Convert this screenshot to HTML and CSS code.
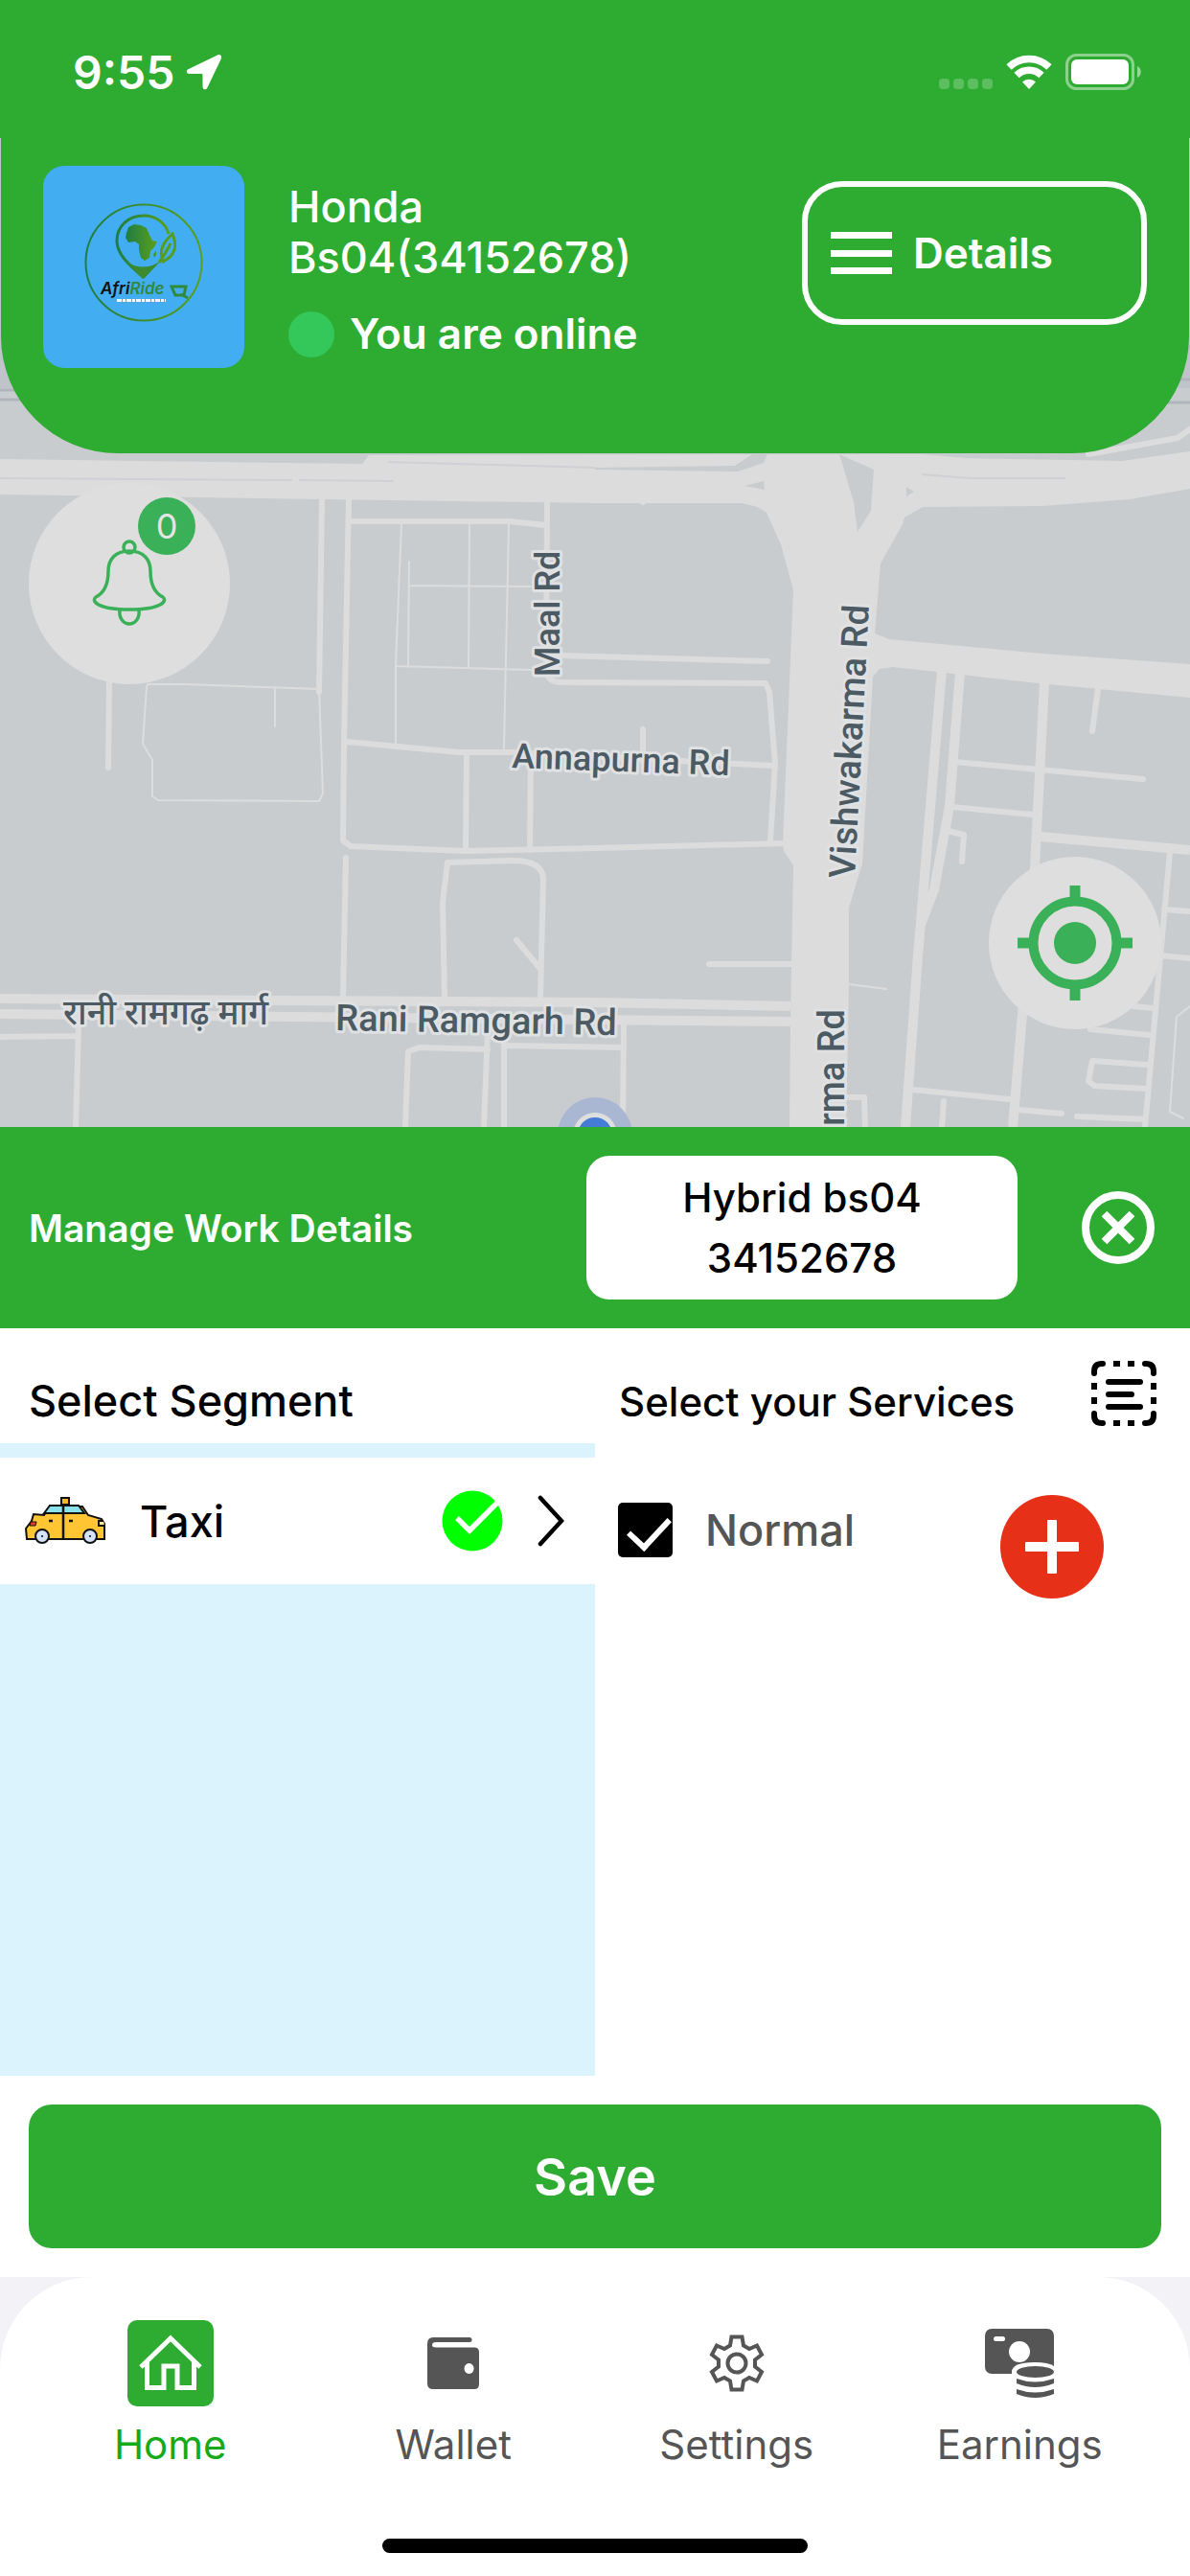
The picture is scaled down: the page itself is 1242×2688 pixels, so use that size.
FILE: index.html
```html
<!DOCTYPE html>
<html lang="en">
  <head>
    <meta charset="UTF-8" />
    <meta name="viewport" content="width=device-width, initial-scale=1.0" />
    <title>AfriRide Driver</title>
    <link rel="stylesheet" href="styles.css">
  </head>
  <body>
    <div class="status-bar">
      <div class="status-time">
        <span>9:55</span>
        <svg width="38" height="38" viewBox="0 0 38 38">
          <path d="M33 1.600 3 16c-3.500 1.700-2.500 5 1 5h12c1 0 1.500.5 1.500 1.500V34c0 4 3.500 4.500 5 1.200L36.500 6c1.500-3.600-.5-6-3.500-4.400z" fill="#fff" />
        </svg>
      </div>
      <div class="status-icons">
        <svg width="56" height="38" viewBox="0 0 56 38" fill="#fff" opacity=".22">
          <rect x="0" y="26" width="11" height="11" rx="4" />
          <rect x="15" y="26" width="11" height="11" rx="4" />
          <rect x="30" y="26" width="11" height="11" rx="4" />
          <rect x="45" y="26" width="11" height="11" rx="4" />
        </svg>
        <svg width="48" height="38" viewBox="0 0 48 38">
          <path d="M3 14a30 30 0 0 1 42 0M11 22.500a18.500 18.500 0 0 1 26 0" fill="none" stroke="#fff" stroke-width="7.500" />
          <path d="M24 37l-7-7.500a10 10 0 0 1 14 0z" fill="#fff" />
        </svg>
        <svg width="80" height="38" viewBox="0 0 80 38">
          <rect x="1.500" y="1.500" width="69" height="35" rx="10" fill="none" stroke="#fff" stroke-width="3" opacity=".45" />
          <rect x="6" y="6" width="60" height="26" rx="6" fill="#fff" />
          <path d="M75 13c5 2 5 10 0 12z" fill="#fff" opacity=".5" />
        </svg>
      </div>
    </div>

    <main class="map">
      <svg class="map-canvas" viewBox="0 144 1242 1032" preserveAspectRatio="xMidYMin slice">
        <rect y="144" width="1242" height="1032" fill="#c9cccf" />
        <rect y="144" width="1242" height="261" fill="#bfc3ca" />
        <path d="M0 407H30M1200 396H1242M0 417H40M1200 420H1242" stroke="#b0b5bc" stroke-width="3" />

        <!-- main roads -->
        <path class="area" d="M0 479 300 483 378 484 385 475 962 474 1009 478 1171 481 1242 471V510L1179 521 1088 528 963 529 944 540 942 547 919 588 913 661 928 667 1088 682 1242 693V728L1084 713 932 696 918 698 911 706 900 901 886 947V1029L883 1176H824L825 1066 828 903 818 888 817 880 828 616 815 568 800 535 791 529 774 525H621L0 516z" />
        <path class="land" d="M785 474 801 474 797 483 770 492 621 490 621 488 767 486zM777 507 797 502 798 511zM876 474 912 490 909 533 895 555 891 524zM946 508 954 513 946 518z" />
        <path d="M0 499 305 501M312 501 410 502M405 482 621 488M962 495 1013 499H1112" fill="none" stroke="#ced0d4" stroke-width="2" />

        <g class="road">
          <path d="M336 519 333 722M114 712 113 801M364 519 359 777 358 877 366 883 485 888 621 885 817 880" />
          <path d="M366 544H531L570 548M571 522 570 700Q572 712 586 712L799 713 803 722 809 797 804 878M584 684 801 690" />
          <path d="M362 774 479 785 535 785 807 799M487 788 486 887M554 790 553 887M671 761V795" />
          <path d="M361 895 358 1040M464 1040 462 942 467 900 535 898Q567 898 567 918L564 1040M539 981 564 1011" />
          <path d="M0 1082 81 1081M82 1070 79 1176M423 1176 426 1097 438 1093 509 1095M509 1075 505 1176M526 1176V1091L651 1093M651 1068 650 1176M740 1006H825" />
          <path d="M1146 719 1140 763M997 795 1193 813M993 842 1078 850M989 867 1006 871 1004 899M1221 889 1195 1176M1215 949 1242 951M1211 997 1242 1000M1183 1050 1203 1052M1138 1074 1199 1080" />
          <path d="M1197 1111 1140 1107 1136 1128 1142 1133 1195 1136M952 1137 1053 1147M985 1149 983 1176M884 1145H902L903 1176M1063 1158 1108 1162M1124 1165 1195 1168M1136 474 1229 457 1242 448M668 520 671 524" />
        </g>
        <g class="road wide">
          <path d="M0 1042 621 1046 825 1050M0 1058 825 1066M983 699 958 997 945 1176M1002 701 991 841 975 928 961 965M1090 712 1080 905 1057 1176M1086 873 1242 887" />
        </g>
        <g class="road thin">
          <path d="M419 547 413 694V777M427 586 426 695M427 611 554 612M490 547 489 696M531 547 526 781M413 695 554 699" />
          <path d="M154 714H194L333 719 337 828 333 836 165 835 159 831V793L149 776 153 717zM287 717V758M1242 1050 1228 1061 1221 1160 1235 1167M886 1027 925 1032" />
        </g>

        <circle cx="621" cy="1184" r="39" fill="#a9b7d2" />
        <circle cx="621" cy="1184" r="23" fill="#dedede" />
        <circle cx="621" cy="1184" r="18" fill="#447cd6" />

        <g class="map-label">
          <text transform="translate(584 706) rotate(-90)">Maal Rd</text>
          <text transform="translate(534 801) rotate(2)">Annapurna Rd</text>
          <text class="main-road" transform="translate(892 917) rotate(-87)">Vishwakarma Rd</text>
          <text class="main-road" transform="translate(350 1075) rotate(1)">Rani Ramgarh Rd</text>
          <text transform="translate(66 1069)" lang="hi">रानी रामगढ़ मार्ग</text>
          <text class="main-road" transform="translate(881 1053) rotate(-90)" text-anchor="end">Vishwakarma Rd</text>
        </g>
      </svg>

      <header class="profile">
        <svg class="avatar" viewBox="-25 -17 210 211">
          <defs>
            <linearGradient id="leaf" x1="0" x2="1">
              <stop offset="0" stop-color="#1f7d45" />
              <stop offset="1" stop-color="#5a9f1c" />
            </linearGradient>
          </defs>
          <circle cx="80" cy="84" r="60.500" fill="none" stroke="url(#leaf)" stroke-width="2" />
          <path d="M80 100C70 90 52 78 52 61 52 46 64 35 80 35 93 35 103 43 106 54" fill="none" stroke="url(#leaf)" stroke-width="3" />
          <path d="M62 83q17 11 35 0L80 101z" fill="#3b8a30" />
          <path d="M62 53l2-6 6-3 7 1 6 3 3 7 3 6 5 1-3 6-4 4-1 7-5 3-4-3-2-8v-6l-4-3-7 1-3-5z" fill="url(#leaf)" />
          <path d="M90 75l3-3v4l-2 3z" fill="#4a9628" />
          <path d="M110 54c5 12 4 22-10 29-4-11-1-19 10-29zM96 84c4-6 8-12 12-20" fill="none" stroke="#569c1e" stroke-width="3" />
          <text class="logo-name" x="35" y="117"><tspan fill="#111">Afri</tspan><tspan fill="#2f8a3a">Ride</tspan></text>
          <path d="M109 109h15l-2 9h-9zM119 117l7 4" fill="none" stroke="#2f8a3a" stroke-width="3" />
          <path d="M52 123.500h51" stroke="#eef6ff" stroke-width="3" stroke-dasharray="5 1 3 1" />
        </svg>
        <div class="driver">
          <div class="driver-name">Honda Bs04(34152678)</div>
          <div class="driver-state"><span class="dot"></span>You are online</div>
        </div>
        <button class="details-btn">
          <svg width="64" height="46" viewBox="0 0 64 46" fill="#fff">
            <rect y="1" width="64" height="7" />
            <rect y="20" width="64" height="7" />
            <rect y="38" width="64" height="7" />
          </svg>
          Details
        </button>
      </header>

      <button class="map-btn bell-btn" aria-label="Notifications">
        <svg width="78" height="92" viewBox="0 0 78 92" fill="none" stroke="#3ab158" stroke-width="3.500">
          <circle cx="39" cy="8" r="6" />
          <path d="M39 12C24 12 17 21 17 33 17 48 12 56 4 60-1 64 5 73 39 73S79 64 74 60C66 56 61 48 61 33 61 21 54 12 39 12z" />
          <path d="M29 74c-1 8 4 14 10 14s11-6 10-14" />
        </svg>
        <span class="badge">0</span>
      </button>

      <button class="map-btn locate-btn" aria-label="My location">
        <svg width="120" height="120" viewBox="0 0 120 120">
          <path d="M60 0v16M60 104v16M0 60h16M104 60h16" stroke="#3ab158" stroke-width="11" />
          <circle cx="60" cy="60" r="43.500" fill="none" stroke="#3ab158" stroke-width="10" />
          <circle cx="60" cy="60" r="22" fill="#3ab158" />
        </svg>
      </button>
    </main>

    <section class="sheet">
      <div class="sheet-header">
        <h2>Manage Work Details</h2>
        <button class="vehicle-btn">Hybrid bs04<br>34152678</button>
        <button class="close-btn" aria-label="Close">
          <svg width="76" height="76" viewBox="0 0 76 76" fill="none" stroke="#fff" stroke-width="8">
            <circle cx="38" cy="38" r="34" />
            <path d="M23.500 23.500l29 29M52.500 23.500l-29 29" />
          </svg>
        </button>
      </div>

      <div class="columns">
        <div class="segments">
          <h3>Select Segment</h3>
          <button class="segment">
            <svg class="taxi" width="84" height="50" viewBox="0 0 84 50">
              <path d="M20 19 26 10 60 10 66 19 80 23 83 28V44H2L1 33 7 25 9 18z" fill="#ffc533" stroke="#111" stroke-width="2" />
              <path d="M20 17 26 9H56L62 17z" fill="#8ae3ea" stroke="#111" stroke-width="2" />
              <rect x="38" y="1" width="8" height="7" fill="#f5b52a" stroke="#111" stroke-width="2" />
              <path d="M40 9v35M25 25h4M46 25h4" stroke="#111" stroke-width="2.500" />
              <path d="M6 26h6l-1 4H5z" fill="#e0402a" stroke="#111" />
              <path d="M82 25h-5v5h6" fill="#ffe9a6" stroke="#111" stroke-width="2" />
              <circle cx="18" cy="41" r="7" fill="#d4e2fb" stroke="#111" stroke-width="2" />
              <circle cx="68" cy="41" r="7" fill="#d4e2fb" stroke="#111" stroke-width="2" />
              <circle cx="18" cy="41" r="1" />
              <circle cx="68" cy="41" r="1" />
            </svg>
            <span class="segment-name">Taxi</span>
            <svg width="64" height="64" viewBox="0 0 64 64">
              <circle cx="32" cy="32" r="31.500" fill="#0f0" />
              <path d="M16 29l13 13L58 13" fill="none" stroke="#fff" stroke-width="5.500" />
            </svg>
            <svg width="28" height="54" viewBox="0 0 28 54">
              <path d="M3 3l22 24L3 51" fill="none" stroke="#000" stroke-width="4.500" stroke-linecap="round" />
            </svg>
          </button>
        </div>

        <div class="services">
          <div class="services-header">
            <h3>Select your Services</h3>
            <svg width="68" height="68" viewBox="0 0 68 68" fill="none" stroke="#000" stroke-width="6">
              <path d="M3 13V11q0-8 8-8h1M56 3h1q8 0 8 8v2M65 55v2q0 8-8 8h-1M12 65h-1q-8 0-8-8v-2M18 22h33M18 35h24M18 48h33" stroke-linecap="round" />
              <path d="M23 3h7M38 3h7M23 65h7M38 65h7M3 23v7M3 38v7M65 23v7M65 38v7" />
            </svg>
          </div>
          <div class="service">
            <label>
              <input type="checkbox" checked>
              Normal
            </label>
            <button class="add-btn" aria-label="Add">
              <svg width="56" height="56" viewBox="0 0 56 56" fill="#fff">
                <rect y="23" width="56" height="10" rx="1" />
                <rect x="23" width="10" height="56" rx="1" />
              </svg>
            </button>
          </div>
        </div>
      </div>

      <div class="sheet-footer">
        <button class="save-btn">Save</button>
      </div>
    </section>

    <footer class="bottom">
      <nav class="tabs">
        <a class="tab active" href="#home">
          <span class="tab-icon">
            <svg width="66" height="60" viewBox="0 0 66 60" fill="none" stroke="#fff" stroke-width="5">
              <path d="M2 34 33 4 64 34" />
              <path d="M8.500 29V55.500H26V33H40V55.500H57.500V29" />
            </svg>
          </span>
          Home
        </a>
        <a class="tab" href="#wallet">
          <span class="tab-icon">
            <svg width="54" height="54" viewBox="0 0 54 54">
              <path d="M6 0H44q2.500 0 2.500 2.500T44 5H9Q5 5 5 8q0 2.500 4 2.500H49q5 0 5 5V49q0 5-5 5H6q-6 0-6-6V7Q0 0 6 0zM43.500 27a5 5.500 0 1 0 .1 0z" fill="#555" fill-rule="evenodd" />
            </svg>
          </span>
          Wallet
        </a>
        <a class="tab" href="#settings">
          <span class="tab-icon">
            <svg width="58" height="60" viewBox="0 0 58 60" fill="none" stroke="#555" stroke-width="4">
              <path d="M23.500 2.500h11l1.500 9 6 3.500 8-3.500 5 9.500-7 5.500v7l7 5.500-5 9.500-8-3.500-6 3.500-1.500 9h-11l-1.500-9-6-3.500-8 3.500-5-9.500 7-5.500v-7l-7-5.500 5-9.500 8 3.500 6-3.500z" />
              <circle cx="29" cy="30" r="9.500" />
            </svg>
          </span>
          Settings
        </a>
        <a class="tab" href="#earnings">
          <span class="tab-icon">
            <svg width="72" height="72" viewBox="0 0 72 72">
              <rect width="72" height="47" rx="7" fill="#555" />
              <rect x="9" y="8" width="12" height="5" rx="2.500" fill="#fff" />
              <circle cx="36" cy="24" r="11" fill="#fff" />
              <path d="M28 72V45q0-10 24-10 14 0 20 4V72z" fill="#fff" />
              <ellipse cx="52.500" cy="45" rx="19.500" ry="6" fill="#555" />
              <path d="M33 52q19 7 39 0v5q-20 8-39 0zM33 63q19 7 39 0v5q-20 8-39 0z" fill="#555" />
            </svg>
          </span>
          Earnings
        </a>
      </nav>
      <div class="home-indicator"></div>
    </footer>
  </body>
</html>
```

FILE: styles.css
```css
:root {
  --green: #2eac32;
  --map-green: #3ab158;
  --light-blue: #dbf3fd;
  --grey: #555;
}

* {
  box-sizing: border-box;
}

body {
  margin: 0;
  min-height: 100vh;
  display: flex;
  flex-direction: column;
  background: #fff;
  color: #000;
  font-family: Inter, "Liberation Sans", sans-serif;
  overflow-x: hidden;
}

svg {
  display: block;
  flex-shrink: 0;
}

button {
  font-family: inherit;
  border: none;
  padding: 0;
  background: none;
  color: inherit;
  cursor: pointer;
}

h2,
h3 {
  margin: 0;
}

/* status bar */
.status-bar {
  height: 144px;
  padding: 6px 50px 0 76px;
  display: flex;
  align-items: center;
  justify-content: space-between;
  background: var(--green);
  color: #fff;
}

.status-time {
  display: flex;
  align-items: center;
  gap: 12px;
  font-size: 48px;
  font-weight: 600;
}

.status-icons {
  display: flex;
  gap: 14px;
}

/* map */
.map {
  flex: 1;
  min-height: 900px;
  position: relative;
  overflow: hidden;
}

.map-canvas {
  position: absolute;
  top: 0;
  left: 0;
  width: 100%;
  height: 100%;
}

.area {
  fill: #dcdcdc;
}

.land {
  fill: #c9cccf;
}

.road {
  fill: none;
  stroke: #dcdcdc;
  stroke-width: 6;
  stroke-linecap: round;
  stroke-linejoin: round;
}

.road.wide {
  stroke-width: 10;
  stroke-linecap: butt;
}

.road.thin {
  stroke-width: 2;
}

.map-label {
  font-family: Roboto, "Noto Sans", sans-serif;
  font-size: 36px;
  font-weight: 500;
  fill: #4c5a63;
  stroke: #dfe1e3;
  stroke-width: 6;
  stroke-linejoin: round;
  paint-order: stroke;
}

.map-label .main-road {
  font-size: 38px;
}

.profile {
  position: relative;
  height: 329px;
  margin: 0 1px;
  padding: 29px 44px 0;
  display: flex;
  align-items: flex-start;
  background: var(--green);
  color: #fff;
  border-radius: 0 0 122px 122px;
}

.avatar {
  width: 210px;
  height: 211px;
  border-radius: 22px;
  background: #43adf1;
}

.logo-name {
  font-size: 17px;
  font-style: italic;
  font-weight: 600;
}

.driver {
  max-width: 420px;
  margin: 16px 0 0 46px;
  font-size: 44px;
  line-height: 53px;
}

.driver-name {
  font-size: 45px;
  font-weight: 500;
}

.driver-state {
  margin-top: 27px;
  display: flex;
  align-items: center;
  gap: 16px;
  font-weight: 600;
}

.dot {
  width: 48px;
  height: 48px;
  border-radius: 50%;
  background: #34c759;
}

.details-btn {
  width: 360px;
  height: 150px;
  margin: 16px 0 0 auto;
  padding-left: 24px;
  display: flex;
  align-items: center;
  gap: 22px;
  border: 6px solid #fff;
  border-radius: 42px;
  color: #fff;
  font-size: 44px;
  font-weight: 600;
}

.map-btn {
  position: absolute;
  display: flex;
  align-items: center;
  justify-content: center;
  border-radius: 50%;
  background: #dedede;
}

.bell-btn {
  top: 360px;
  left: 30px;
  width: 210px;
  height: 210px;
}

.locate-btn {
  right: 30px;
  bottom: 102px;
  width: 180px;
  height: 180px;
}

.badge {
  position: absolute;
  top: 15px;
  right: 36px;
  width: 60px;
  height: 60px;
  border-radius: 50%;
  background: var(--map-green);
  color: #e4e4e4;
  font-size: 36px;
  line-height: 60px;
}

/* work details sheet */
.sheet-header {
  height: 210px;
  padding: 0 37px 0 30px;
  display: flex;
  align-items: center;
  background: var(--green);
}

.sheet-header h2 {
  flex: 1;
  color: #fff;
  font-size: 39px;
  font-weight: 600;
}

.vehicle-btn {
  width: 450px;
  height: 150px;
  margin-right: 67px;
  border-radius: 24px;
  background: #fff;
  font-size: 42px;
  font-weight: 500;
  line-height: 63px;
}

.columns {
  display: flex;
  min-height: 780px;
}

.segments,
.services {
  flex: 1;
}

.segments {
  background: var(--light-blue);
}

.segments h3 {
  height: 120px;
  padding: 32px 30px 0;
  background: #fff;
  font-size: 45px;
  line-height: 88px;
  font-weight: 500;
}

.segment {
  width: 100%;
  height: 132px;
  margin-top: 15px;
  padding: 0 32px 0 26px;
  display: flex;
  align-items: center;
  background: #fff;
  gap: 36px;
}

.segment-name {
  flex: 1;
  text-align: left;
  font-size: 45px;
  font-weight: 500;
}

.services-header {
  height: 135px;
  padding: 0 35px 0 25px;
  display: flex;
  align-items: center;
  justify-content: space-between;
}

.services-header h3 {
  padding-top: 18px;
  font-size: 42px;
  font-weight: 500;
}

.service {
  padding: 39px 90px 0 24px;
  display: flex;
  justify-content: space-between;
}

.service label {
  height: 72px;
  display: flex;
  align-items: center;
  gap: 34px;
  color: var(--grey);
  font-size: 45px;
  font-weight: 500;
}

.service input {
  appearance: none;
  width: 57px;
  height: 57px;
  margin: 0;
  border-radius: 5px;
  background: #000;
  position: relative;
}

.service input:checked::after {
  content: "";
  position: absolute;
  top: 6px;
  left: 20px;
  width: 19px;
  height: 36px;
  border: solid #fff;
  border-width: 0 6px 6px 0;
  transform: rotate(43deg);
}

.add-btn {
  width: 108px;
  height: 108px;
  display: flex;
  align-items: center;
  justify-content: center;
  border-radius: 50%;
  background: #e63018;
}

.sheet-footer {
  padding: 30px;
}

.save-btn {
  display: block;
  width: 100%;
  height: 150px;
  border-radius: 24px;
  background: var(--green);
  color: #fff;
  font-size: 54px;
  font-weight: 600;
}

/* bottom navigation */
.bottom {
  background: linear-gradient(#f2f2f7 50%, #fff 50%);
}

.tabs {
  height: 273px;
  padding: 45px 30px 0;
  display: flex;
  background: #fff;
  border-radius: 96px 96px 0 0;
}

.tab {
  flex: 1;
  display: flex;
  flex-direction: column;
  align-items: center;
  gap: 16px;
  color: var(--grey);
  font-size: 42px;
  line-height: 48px;
  text-decoration: none;
}

.tab-icon {
  width: 90px;
  height: 90px;
  display: flex;
  align-items: center;
  justify-content: center;
  border-radius: 10px;
}

.tab.active {
  color: #16aa1a;
}

.tab.active .tab-icon {
  background: var(--green);
}

.home-indicator {
  width: 444px;
  height: 15px;
  margin: 0 auto 24px;
  border-radius: 8px;
  background: #000;
}
```
